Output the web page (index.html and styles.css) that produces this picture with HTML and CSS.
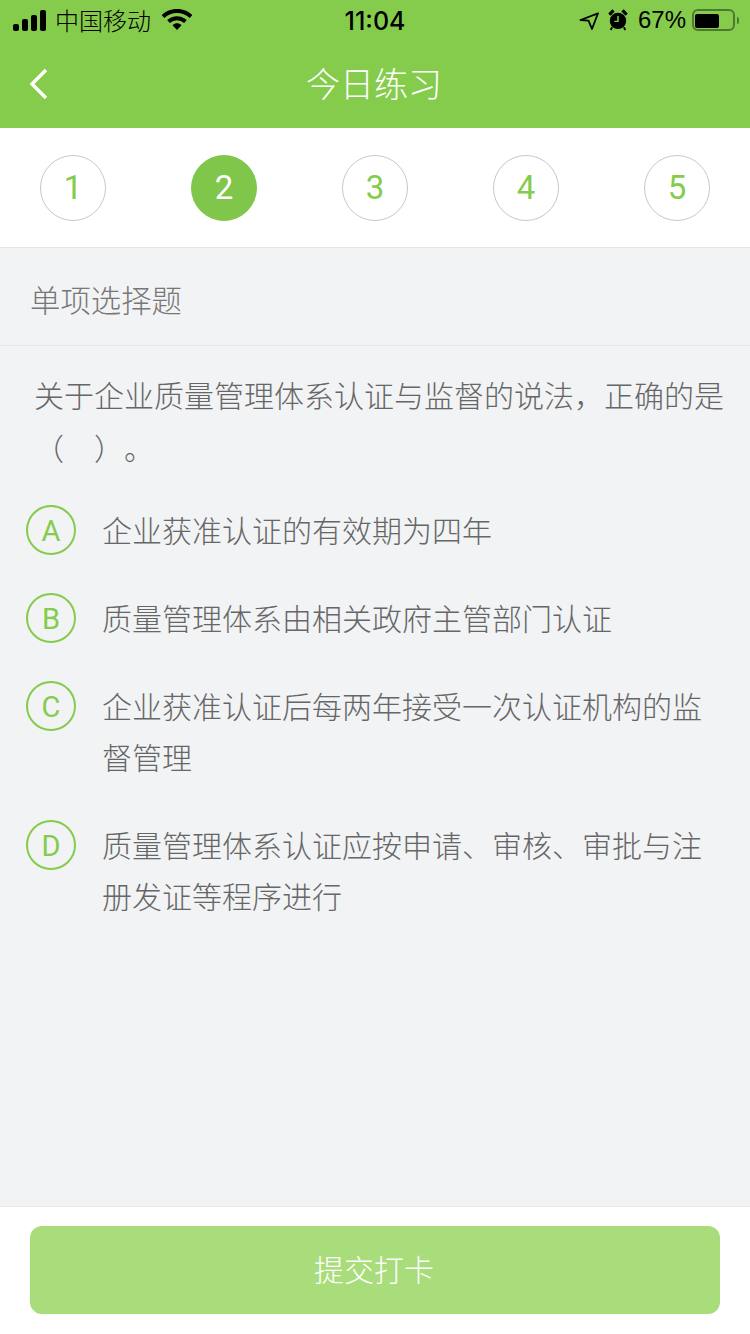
FILE: index.html
```html
<!DOCTYPE html>
<html lang="zh-CN">
  <head>
    <meta charset="UTF-8" />
    <meta name="viewport" content="width=device-width, initial-scale=1.0" />
    <title>今日练习</title>
    <link rel="stylesheet" href="styles.css">
  </head>
  <body>
    <div class="page">
      <header class="header">
        <div class="status-bar">
          <div class="status-left">
            <svg class="signal" width="34" height="21" viewBox="0 0 34 21">
              <rect x="0" y="14" width="6" height="7" rx="2" />
              <rect x="9" y="9" width="6" height="12" rx="2" />
              <rect x="18" y="5" width="6" height="16" rx="2" />
              <rect x="27" y="0" width="6" height="21" rx="2" />
            </svg>
            <span class="carrier">中国移动</span>
            <svg class="wifi" width="30" height="22" viewBox="0 0 30 22">
              <path d="M1 7.500C9 0 21 0 29 7.500" fill="none" stroke="#000" stroke-width="4" />
              <path d="M6.500 12.500C11.500 8 18.500 8 23.500 12.500" fill="none" stroke="#000" stroke-width="4" />
              <path d="M10.500 16.200C13.500 13.600 16.500 13.600 19.500 16.200L15 21Z" />
            </svg>
          </div>
          <div class="status-time">11:04</div>
          <div class="status-right">
            <svg class="arrow" width="20" height="20" viewBox="0 0 20 20">
              <path d="M19 3.300L1.500 10L9.500 10.700L13 19Z" fill="none" stroke="#000" stroke-width="1.800" stroke-linejoin="round" />
            </svg>
            <svg class="alarm" width="20" height="22" viewBox="0 0 22 24">
              <circle cx="11" cy="13" r="9" />
              <path d="M1.500 6L6 1.500M20.500 6L16 1.500" stroke="#000" stroke-width="3.500" />
              <path d="M4.500 20L3 23M17.500 20L19 23" stroke="#000" stroke-width="2" />
              <path d="M11 7.500V13.500H7" fill="none" stroke="#85cc4c" stroke-width="1.600" />
            </svg>
            <span class="battery-pct">67%</span>
            <div class="battery">
              <div class="battery-level"></div>
            </div>
            <div class="battery-cap"></div>
          </div>
        </div>
        <div class="nav">
          <svg class="back" width="20" height="32" viewBox="0 0 20 32">
            <path d="M17 2L3 16L17 30" fill="none" stroke="#fff" stroke-width="3.500" />
          </svg>
          <h1 class="nav-title">今日练习</h1>
        </div>
      </header>

      <div class="steps">
        <div class="step">1</div>
        <div class="step active">2</div>
        <div class="step">3</div>
        <div class="step">4</div>
        <div class="step">5</div>
      </div>

      <main class="content">
        <div class="section-title">单项选择题</div>
        <p class="question">关于企业质量管理体系认证与监督的说法，正确的是<br>（　）。</p>
        <ul class="options">
          <li class="option">
            <span class="letter">A</span>
            <span class="option-text">企业获准认证的有效期为四年</span>
          </li>
          <li class="option">
            <span class="letter">B</span>
            <span class="option-text">质量管理体系由相关政府主管部门认证</span>
          </li>
          <li class="option">
            <span class="letter">C</span>
            <span class="option-text">企业获准认证后每两年接受一次认证机构的监督管理</span>
          </li>
          <li class="option">
            <span class="letter">D</span>
            <span class="option-text">质量管理体系认证应按申请、审核、审批与注册发证等程序进行</span>
          </li>
        </ul>
      </main>

      <footer class="footer">
        <button type="button" class="submit">提交打卡</button>
      </footer>
    </div>
  </body>
</html>
```

FILE: styles.css
```css
html,
body {
  margin: 0;
  padding: 0;
}
body {
  font-family: "Noto Sans CJK SC", "Liberation Sans", sans-serif;
  background-color: #f2f3f5;
  text-spacing-trim: space-all;
}
.page {
  display: flex;
  flex-direction: column;
  width: 750px;
  height: 1334px;
  overflow: hidden;
}

/* header */
.header {
  background-color: #85cc4c;
  height: 128px;
  flex-shrink: 0;
}
.status-bar {
  display: flex;
  align-items: center;
  justify-content: space-between;
  box-sizing: border-box;
  height: 40px;
  padding: 0 11px 0 13px;
  color: #000;
  position: relative;
}
.status-left,
.status-right {
  display: flex;
  align-items: center;
}
.carrier {
  font-size: 24px;
  line-height: 38px;
  margin-bottom: 1px;
  margin-left: 8px;
  font-weight: 300;
}
.wifi {
  margin-left: 11px;
}
.status-time {
  position: absolute;
  left: 0;
  right: 0;
  padding-top: 2px;
  text-align: center;
  font-family: "Inter", "Liberation Sans", sans-serif;
  font-size: 25px;
  font-weight: 500;
}
.arrow {
  margin-right: 9px;
}
.alarm {
  margin-right: 10px;
}
.battery-pct {
  font-family: "Liberation Sans", sans-serif;
  font-size: 24px;
  margin-right: 6px;
}
.battery {
  box-sizing: border-box;
  width: 43px;
  height: 22px;
  margin-bottom: 1px;
  border: 2px solid #4f7a2e;
  border-radius: 6px;
  padding: 3px 1px;
}
.battery-level {
  width: 24px;
  height: 14px;
  background-color: #000;
  border-radius: 2px;
}
.battery-cap {
  width: 2px;
  height: 7px;
  margin-left: 2px;
  background-color: #4f7a2e;
  border-radius: 0 2px 2px 0;
}
.nav {
  position: relative;
  display: flex;
  align-items: center;
  justify-content: center;
  height: 88px;
}
.back {
  position: absolute;
  left: 29px;
  top: 28px;
}
.nav-title {
  margin: 0 2px 3px 0;
  color: #fff;
  font-size: 34px;
  font-weight: 300;
}

/* step numbers */
.steps {
  display: flex;
  justify-content: space-between;
  align-items: center;
  height: 119px;
  padding: 0 40px;
  background-color: #fff;
  border-bottom: 1px solid #e6e6e6;
  flex-shrink: 0;
}
.step {
  box-sizing: border-box;
  display: flex;
  align-items: center;
  justify-content: center;
  width: 66px;
  height: 66px;
  border: 1px solid #c8c8c8;
  border-radius: 50%;
  color: #85cc4c;
  font-family: "Roboto", "Liberation Sans", sans-serif;
  font-size: 33px;
}
.step.active {
  background-color: #7fc64a;
  border-color: #7fc64a;
  color: #fff;
}

/* question */
.content {
  flex: 1;
}
.section-title {
  height: 98px;
  line-height: 102px;
  padding-left: 30px;
  box-sizing: border-box;
  border-bottom: 1px solid #e6e7e9;
  color: #777;
  font-size: 30.4px;
  font-weight: 300;
}
.question {
  margin: 0;
  padding: 22px 20px 0 34px;
  color: #666;
  font-size: 30px;
  font-weight: 300;
  line-height: 53px;
}
.options {
  list-style-type: none;
  margin: 30px 0 0;
  padding: 0 26px;
}
.option {
  display: flex;
  align-items: flex-start;
  margin-bottom: 37px;
}
.letter {
  box-sizing: border-box;
  flex-shrink: 0;
  display: flex;
  align-items: center;
  justify-content: center;
  width: 50px;
  height: 50px;
  margin-top: 1px;
  padding-top: 1px;
  border: 2px solid #85cc4c;
  border-radius: 50%;
  color: #85cc4c;
  font-family: "Roboto", "Liberation Sans", sans-serif;
  font-size: 29px;
}
.option-text {
  margin-left: 26px;
  padding-right: 20px;
  color: #666;
  font-size: 30px;
  font-weight: 300;
  line-height: 51px;
}

/* footer */
.footer {
  flex-shrink: 0;
  box-sizing: border-box;
  height: 128px;
  padding: 19px 30px 0;
  background-color: #fff;
  border-top: 1px solid #e8e8ec;
}
.submit {
  display: block;
  width: 100%;
  height: 88px;
  padding: 0 2px 4px 0;
  border: none;
  border-radius: 12px;
  background-color: #a9dc7a;
  color: #fff;
  font-family: inherit;
  font-size: 30px;
  font-weight: 300;
}
```
